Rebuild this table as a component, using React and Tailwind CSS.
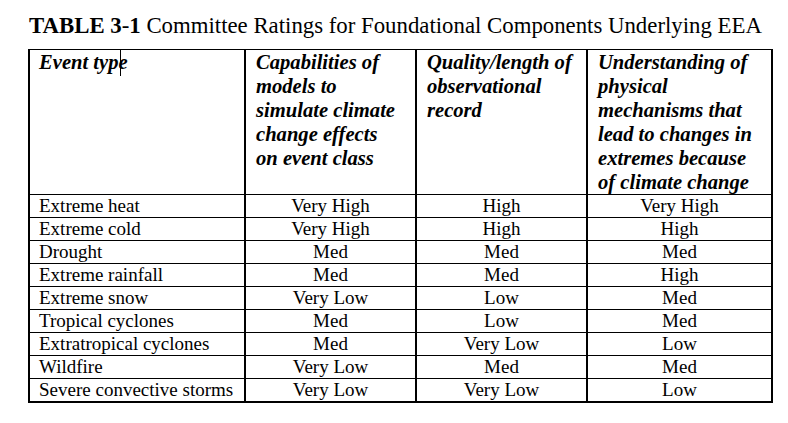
import React from "react";

const rows = [
  ["Extreme heat", "Very High", "High", "Very High"],
  ["Extreme cold", "Very High", "High", "High"],
  ["Drought", "Med", "Med", "Med"],
  ["Extreme rainfall", "Med", "Med", "High"],
  ["Extreme snow", "Very Low", "Low", "Med"],
  ["Tropical cyclones", "Med", "Low", "Med"],
  ["Extratropical cyclones", "Med", "Very Low", "Low"],
  ["Wildfire", "Very Low", "Med", "Med"],
  ["Severe convective storms", "Very Low", "Very Low", "Low"],
];

const serif = { fontFamily: '"Liberation Serif", "Times New Roman", serif' };

function Lines({ items }) {
  return items.map((t, i) => (
    <div key={i} className="whitespace-nowrap">{t}</div>
  ));
}

export default function App() {
  return (
    <div className="w-[788px] h-[423px] bg-white text-black overflow-hidden pl-[28px]" style={serif}>
      <div className="pt-[13px] text-[22.8px] leading-[26px] whitespace-nowrap pl-[1px]">
        <span className="font-bold">TABLE 3</span>-<span className="font-bold">1</span> Committee Ratings for Foundational Components Underlying EEA
      </div>
      <div className="mt-[10px] w-[745px] border-t border-l-2 border-r-2 border-b-2 border-black">
        <div className="flex h-[144px] font-bold italic text-[20.6px] leading-[24px]">
          <div className="relative w-[216px] pl-[9px] border-r-2 border-black">
            <div className="whitespace-nowrap">Event type</div>
            <span className="absolute left-[90px] top-[-1px] w-px h-[27px] bg-black" />
          </div>
          <div className="w-[171px] pl-[10px] border-r-2 border-black">
            <Lines items={["Capabilities of", "models to", "simulate climate", "change effects", "on event class"]} />
          </div>
          <div className="w-[171px] pl-[10px] border-r-2 border-black">
            <Lines items={["Quality/length of", "observational", "record"]} />
          </div>
          <div className="flex-1 pl-[10px]">
            <Lines items={["Understanding of", "physical", "mechanisms that", "lead to changes in", "extremes because", "of climate change"]} />
          </div>
        </div>
        {rows.map((r, i) => (
          <div key={i} className="flex h-[23px] border-t border-black text-[19px] leading-[22px]">
            <div className="w-[216px] pl-[9px] border-r-2 border-black whitespace-nowrap">{r[0]}</div>
            <div className="w-[171px] text-center border-r-2 border-black">{r[1]}</div>
            <div className="w-[171px] text-center border-r-2 border-black">{r[2]}</div>
            <div className="flex-1 text-center">{r[3]}</div>
          </div>
        ))}
      </div>
    </div>
  );
}
